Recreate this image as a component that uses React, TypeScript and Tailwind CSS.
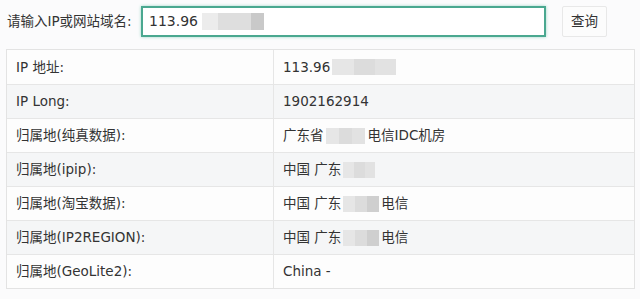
const font = { fontFamily: '"DejaVu Sans", "Noto Sans CJK SC", sans-serif' };

function Blur({ w, dark = false }: { w: number; dark?: boolean }) {
  return (
    <span
      className="inline-flex h-[16px] align-middle mx-[2px]"
      style={{ width: w }}
    >
      <span className="flex-1 bg-[#e6e6e6]" />
      <span className="flex-1 bg-[#dcdcdc]" />
      <span className={`flex-1 ${dark ? 'bg-[#cfcfcf]' : 'bg-[#e2e2e2]'}`} />
    </span>
  );
}

const rows: { label: string; value: React.ReactNode }[] = [
  { label: 'IP 地址:', value: <>113.96<Blur w={64} /></> },
  { label: 'IP Long:', value: '1902162914' },
  { label: '归属地(纯真数据):', value: <>广东省<Blur w={40} />电信IDC机房</> },
  { label: '归属地(ipip):', value: <>中国 广东 <Blur w={32} /></> },
  { label: '归属地(淘宝数据):', value: <>中国 广东 <Blur w={36} dark />电信</> },
  { label: '归属地(IP2REGION):', value: <>中国 广东 <Blur w={36} dark />电信</> },
  { label: '归属地(GeoLite2):', value: 'China -' },
];

export default function App() {
  return (
    <div className="w-[640px] h-[299px] bg-[#fbfbfc] text-[#333] overflow-hidden" style={font}>
      {/* query bar */}
      <div className="flex items-center h-[42px] pl-[7px]">
        <span className="shrink-0 whitespace-nowrap text-[13.5px] w-[134px]">请输入IP或网站域名:</span>
        <div className="shrink-0 w-[405px] h-[31px] border-2 border-[#4aa890] bg-white flex items-center pl-[6px] shadow-[0_0_3px_#9ed8c8]">
          <span className="text-[14px]">113.96</span>
          <span className="inline-flex h-[17px] w-[62px] ml-[4px]">
            <span className="w-[16px] bg-[#ececec]" />
            <span className="flex-1 bg-[#dedede]" />
            <span className="w-[13px] bg-[#c9c9c9]" />
          </span>
        </div>
        <button className="shrink-0 ml-[16px] w-[45px] h-[31px] border border-[#e8e8e8] bg-[#fcfcfc] rounded-[2px] text-[13.5px] text-[#333]">
          查询
        </button>
      </div>

      {/* result table */}
      <div className="mt-[7px] mx-[6px] w-[629px] border border-[#e3e3e3]">
        {rows.map((r, i) => (
          <div
            key={r.label}
            className={`flex h-[34px] text-[13.5px] ${i > 0 ? 'border-t border-[#e6e6e6]' : ''} ${i % 2 === 1 ? 'bg-[#f5f6f7]' : 'bg-[#fdfdfd]'}`}
          >
            <div className="w-[267px] flex items-center pl-[9px] border-r border-[#e6e6e6]">{r.label}</div>
            <div className="flex-1 flex items-center pl-[9px]">{r.value}</div>
          </div>
        ))}
      </div>
    </div>
  );
}
